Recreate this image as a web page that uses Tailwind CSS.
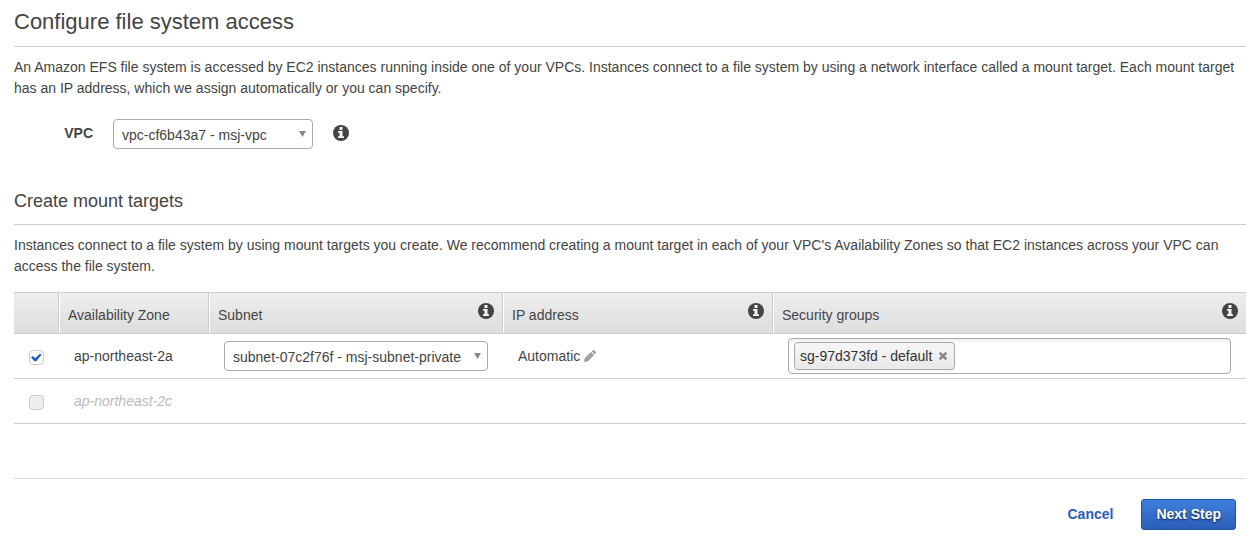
<!DOCTYPE html>
<html lang="en">
<head>
<meta charset="utf-8">
<meta name="viewport" content="width=device-width, initial-scale=1">
<title>Configure file system access</title>
<script src="https://cdn.jsdelivr.net/npm/@tailwindcss/browser@4"></script>
</head>
<body class="bg-white font-['Liberation_Sans',Arial,sans-serif] text-sm/[21px] text-[#444]">
<svg class="hidden" aria-hidden="true">
  <symbol id="info" viewBox="0 0 16 16"><circle cx="8" cy="8" r="8" fill="currentColor"/><path fill="#f4f4f4" d="M6.500 2h3v3h-3zM5 6h4.500v5.200H11V13H5v-1.800h1.500V7.800H5z"/></symbol>
  <symbol id="arrow" viewBox="0 0 7 6"><path fill="currentColor" d="M0 0h7L3.500 6z"/></symbol>
</svg>
<main class="pl-3.5 pr-2">
  <h1 class="border-b border-[#ccc] pt-[9px] pb-[11px] text-[22px]/[26px]">Configure file system access</h1>
  <p class="mt-2.5">An Amazon EFS file system is accessed by EC2 instances running inside one of your VPCs. Instances connect to a file system by using a network interface called a mount target. Each mount target has an IP address, which we assign automatically or you can specify.</p>

  <div class="mt-5 flex items-center">
    <label for="vpc" class="w-[79px] pb-0.5 text-right font-bold">VPC</label>
    <div class="relative ml-5 w-[200px]">
      <select id="vpc" class="block h-[30px] w-full appearance-none rounded border border-[#aaa] bg-white pt-0.5 pl-2 pr-6"><option>vpc-cf6b43a7 - msj-vpc</option></select>
      <svg class="pointer-events-none absolute top-3 right-[7px] h-1.5 w-[7px] text-[#888]"><use href="#arrow"/></svg>
    </div>
    <button type="button" aria-label="VPC help" class="ml-5 pb-0.5"><svg class="size-4"><use href="#info"/></svg></button>
  </div>

  <h2 class="mt-[41px] border-b border-[#ccc] pb-[11px] text-lg/[23px]">Create mount targets</h2>
  <p class="mt-2.5">Instances connect to a file system by using mount targets you create. We recommend creating a mount target in each of your VPC's Availability Zones so that EC2 instances across your VPC can access the file system.</p>

  <table class="mt-[15px] w-full table-fixed border-separate border-spacing-0">
    <colgroup><col class="w-[45px]"><col class="w-[150px]"><col class="w-[294px]"><col class="w-[270px]"><col></colgroup>
    <thead>
      <tr class="h-[42px] bg-linear-to-b from-[#eee] to-[#ddd] text-left">
        <td class="border-y border-r border-[#ccc]"></td>
        <th scope="col" class="border-y border-r border-l border-[#ccc] border-l-white pt-1 pl-2 font-normal">Availability Zone</th>
        <th scope="col" class="border-y border-r border-l border-[#ccc] border-l-white pl-2 pr-2 font-normal"><div class="flex items-center justify-between"><span class="pt-1">Subnet</span><button type="button" aria-label="Subnet help" class="pb-1"><svg class="size-4"><use href="#info"/></svg></button></div></th>
        <th scope="col" class="border-y border-r border-l border-[#ccc] border-l-white pl-2 pr-2 font-normal"><div class="flex items-center justify-between"><span class="pt-1">IP address</span><button type="button" aria-label="IP address help" class="pb-1"><svg class="size-4"><use href="#info"/></svg></button></div></th>
        <th scope="col" class="border-y border-l border-[#ccc] border-l-white pl-2 pr-2 font-normal"><div class="flex items-center justify-between"><span class="pt-1">Security groups</span><button type="button" aria-label="Security groups help" class="pb-1"><svg class="size-4"><use href="#info"/></svg></button></div></th>
      </tr>
    </thead>
    <tbody>
      <tr class="h-[45px]">
        <td class="border-b border-[#ccc] pt-0.5 pl-[15px]">
          <div class="relative size-[15px]">
            <input id="zone-a" type="checkbox" checked class="block size-[15px] appearance-none rounded border border-[#ccc] bg-white">
            <svg viewBox="0 0 11 9" class="pointer-events-none absolute top-[3px] left-0.5 h-[9px] w-[11px]"><path d="M0 4.400 1.800 3 4.200 5 8.900.8 10.800 1.600 5.200 8.200H3.400z" fill="#2360c0"/></svg>
          </div>
        </td>
        <td class="border-b border-[#ccc] pl-[15px]"><label for="zone-a">ap-northeast-2a</label></td>
        <td class="border-b border-[#ccc] px-[15px]">
          <div class="relative">
            <select aria-label="Subnet" class="block h-[30px] w-full appearance-none rounded border border-[#aaa] bg-white pt-0.5 pl-2 pr-6"><option>subnet-07c2f76f - msj-subnet-private</option></select>
            <svg class="pointer-events-none absolute top-3 right-[7px] h-1.5 w-[7px] text-[#888]"><use href="#arrow"/></svg>
          </div>
        </td>
        <td class="border-b border-[#ccc] pl-[15px]">
          <div class="flex items-center gap-1"><span>Automatic</span><button type="button" aria-label="Edit IP address"><svg viewBox="0 0 12 12" class="size-3"><path fill="#999" d="M7.700 1.300 8.700.4q.8-.7 1.600 0l1.300 1.300q.7.800 0 1.600l-.9 1zM7 2l3 3-6.200 6.300L0 12l.7-3.800z"/><path d="M2.800 8.800 7.600 4" stroke="#c4c4c4" stroke-width=".7"/></svg></button></div>
        </td>
        <td class="border-b border-[#ccc] px-[15px]">
          <div class="flex h-9 items-center rounded border border-[#aaa] bg-linear-to-b from-[#eee] to-white to-15% px-[5px]">
            <span class="flex h-7 items-center gap-[7px] rounded border border-[#aaa] bg-linear-to-b from-[#f4f4f4] from-20% via-[#f0f0f0] via-50% to-[#e8e8e8] pr-[7px] pl-[5px] text-[#333] shadow-[0_1px_0_rgba(0,0,0,0.05)]">sg-97d373fd - default<button type="button" aria-label="Remove sg-97d373fd"><svg viewBox="110 366 1188 1188" class="size-2 text-[#888]"><path fill="currentColor" d="M1298 1322q0 40-28 68l-136 136q-28 28-68 28t-68-28l-294-294-294 294q-28 28-68 28t-68-28l-136-136q-28-28-28-68t28-68l294-294-294-294q-28-28-28-68t28-68l136-136q28-28 68-28t68 28l294 294 294-294q28-28 68-28t68 28l136 136q28 28 28 68t-28 68l-294 294 294 294q28 28 28 68z"/></svg></button></span>
            <input type="text" aria-label="Security groups" class="min-w-0 flex-1 bg-transparent px-2 outline-none">
          </div>
        </td>
      </tr>
      <tr class="h-[45px]">
        <td class="border-b border-[#ccc] pt-0.5 pl-[15px]"><input id="zone-c" type="checkbox" disabled class="block size-[15px] appearance-none rounded border border-[#ccc] bg-[#eee]"></td>
        <td class="border-b border-[#ccc] pl-[15px] text-[#bbb] italic"><label for="zone-c">ap-northeast-2c</label></td>
        <td class="border-b border-[#ccc]"></td>
        <td class="border-b border-[#ccc]"></td>
        <td class="border-b border-[#ccc]"></td>
      </tr>
    </tbody>
  </table>

  <footer class="mt-[54px] flex items-center justify-end gap-7 border-t border-[#ddd] pt-5 pr-2.5 font-bold">
    <a href="#" class="text-[#2a5db8]">Cancel</a>
    <button type="button" class="h-[31px] rounded-[3px] border border-[#1c52a8] bg-linear-to-b from-[#3f80dc] to-[#2a5db8] px-3.5 text-white [text-shadow:0_1px_2px_rgba(0,0,0,0.7)]">Next Step</button>
  </footer>
</main>
</body>
</html>
